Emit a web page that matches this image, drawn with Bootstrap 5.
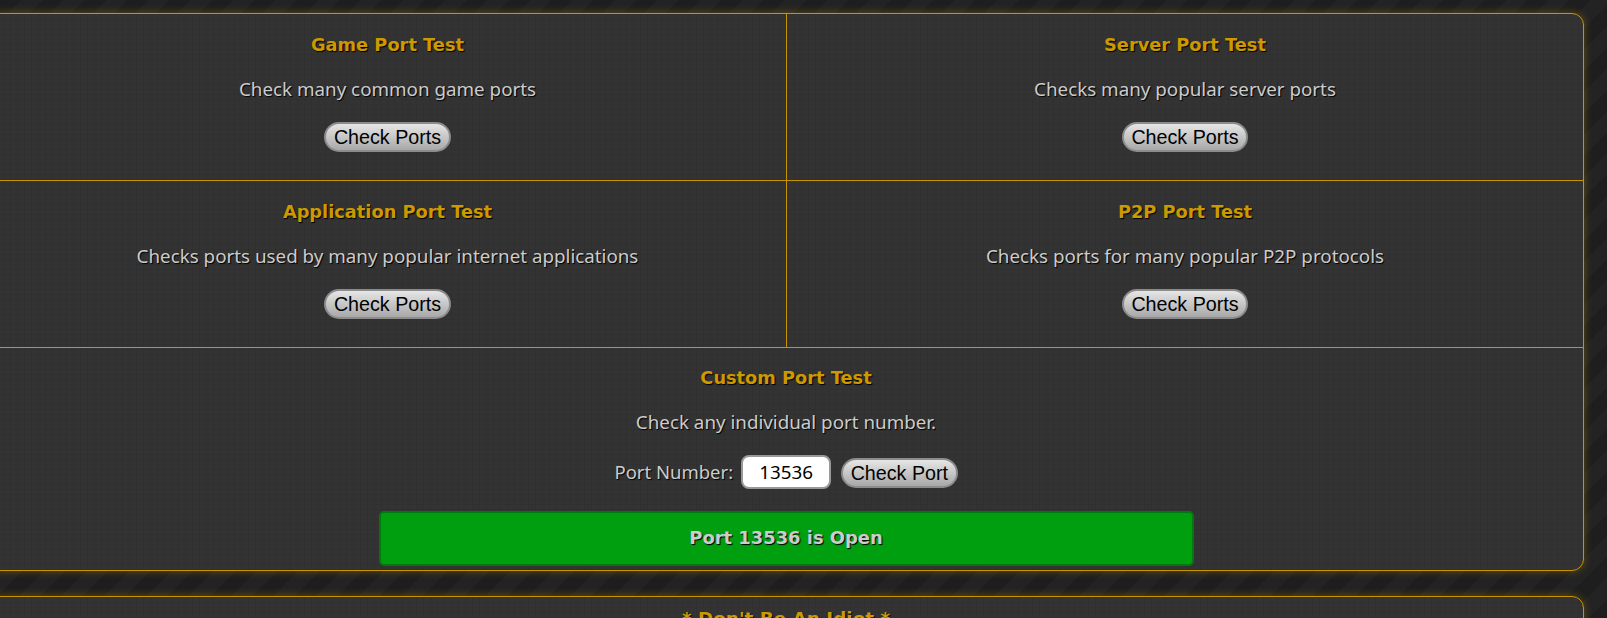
<!DOCTYPE html>
<html lang="en">
<head>
<meta charset="utf-8">
<title>Port Test</title>
<link rel="stylesheet" href="https://cdn.jsdelivr.net/npm/bootstrap@5.3.0/dist/css/bootstrap.min.css">
<style>
html,body{height:618px;overflow:hidden}
body{
  background-color:#1f1f1f;
  background-image:repeating-linear-gradient(135deg,#1e1e1e 0 15px,#232323 15px 30px);
  font-family:"Noto Sans","DejaVu Sans",sans-serif;color:#ccc;
}
.pt-panel{
  margin:13px 23px 0 -12px;
  border:1px solid #c69500;border-radius:12px;
  box-shadow:0 0 9px rgba(198,149,0,.4);
  background-color:#333;
  background-image:
    repeating-linear-gradient(0deg,rgba(0,0,0,.05) 0 1px,transparent 1px 5px),
    repeating-linear-gradient(90deg,rgba(0,0,0,.05) 0 1px,transparent 1px 7px);
}
.pt-panel + .pt-panel{margin-top:25px}
.pt-cell{height:166px;padding-top:20px;text-align:center}
.pt-row{border-bottom:1px solid #c69500}
.pt-cell + .pt-cell{border-left:1px solid #c69500}
.pt-half{flex:0 0 50%;width:50%}
.pt-title{font-family:"DejaVu Sans",sans-serif;font-size:17.8px;font-weight:700;line-height:22px;color:#c90;text-shadow:1px 1px 1px #000;margin:0}
.pt-desc{font-size:18.8px;line-height:24px;margin:21px 0 0;text-shadow:1px 1px 1px #000}
.pt-btn{
  font-family:"Liberation Sans",Arial,sans-serif;font-size:19.7px;line-height:24px;color:#000;
  border:2px solid #8c8c8c;border-radius:15px;height:30px;padding:0 7.5px;
  background:linear-gradient(#e6e6e6,#a8a8a8);
}
.pt-btnwrap{margin-top:21px}
.pt-custom{height:222px;padding-top:19px;text-align:center}
.pt-form{margin-top:21px;font-size:18.5px;text-shadow:1px 1px 1px #000;gap:8px}
.pt-form .pt-btn{margin:2px 0 0 2px}
.pt-input{
  width:90px;height:34px;text-align:center;background:#fff;color:#000;
  border:2px solid #999;border-radius:8px;font-size:18.8px;padding:0;text-shadow:none;
  font-family:inherit;
}
.pt-result{
  width:815px;height:55px;margin:22px auto 0;background:#009f0f;border:2px solid #007a0c;border-radius:5px;
  font-family:"DejaVu Sans",sans-serif;font-size:17.9px;font-weight:700;color:#ccc;text-shadow:1px 1px 1px #000;
}
.pt-top{padding-top:11px}
.pt-top .pt-title{font-size:18.4px}
</style>
</head>
<body>
<div class="pt-panel">
  <div class="d-flex pt-row">
    <div class="pt-cell pt-half"><h3 class="pt-title">Game Port Test</h3><p class="pt-desc">Check many common game ports</p><div class="pt-btnwrap"><button class="pt-btn">Check Ports</button></div></div>
    <div class="pt-cell pt-half"><h3 class="pt-title">Server Port Test</h3><p class="pt-desc">Checks many popular server ports</p><div class="pt-btnwrap"><button class="pt-btn">Check Ports</button></div></div>
  </div>
  <div class="d-flex pt-row">
    <div class="pt-cell pt-half"><h3 class="pt-title">Application Port Test</h3><p class="pt-desc">Checks ports used by many popular internet applications</p><div class="pt-btnwrap"><button class="pt-btn">Check Ports</button></div></div>
    <div class="pt-cell pt-half"><h3 class="pt-title">P2P Port Test</h3><p class="pt-desc">Checks ports for many popular P2P protocols</p><div class="pt-btnwrap"><button class="pt-btn">Check Ports</button></div></div>
  </div>
  <div class="pt-custom">
    <h3 class="pt-title">Custom Port Test</h3>
    <p class="pt-desc">Check any individual port number.</p>
    <div class="pt-form d-flex justify-content-center align-items-center">
      <span>Port Number:</span>
      <input class="pt-input" type="text" value="13536">
      <button class="pt-btn">Check Port</button>
    </div>
    <div class="pt-result d-flex align-items-center justify-content-center">Port 13536 is Open</div>
  </div>
</div>
<div class="pt-panel">
  <div class="pt-cell pt-top"><h3 class="pt-title">* Don't Be An Idiot *</h3></div>
</div>
</body>
</html>
